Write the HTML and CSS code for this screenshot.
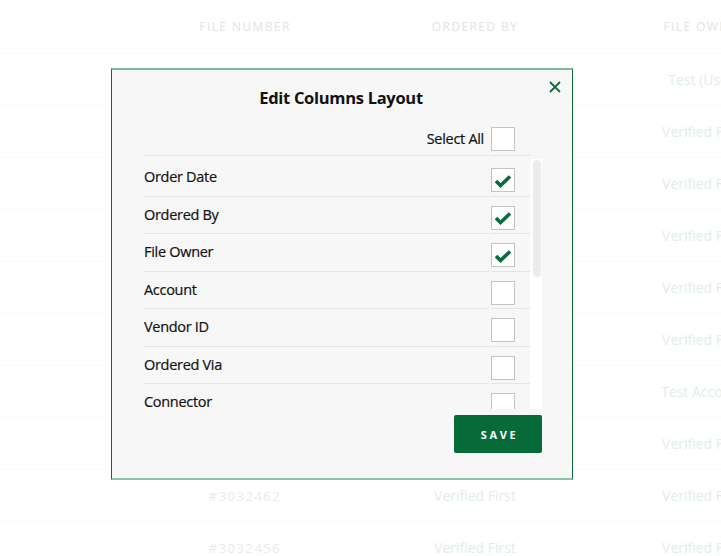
FILE: index.html
```html
<!DOCTYPE html>
<html lang="en">
<head>
<meta charset="utf-8">
<title>Edit Columns Layout</title>
<link rel="stylesheet" href="styles.css">
</head>
<body>
<div class="page">
  <div class="table">
    <div class="thead">
      <div class="cell head">File Number</div>
      <div class="cell head">Ordered By</div>
      <div class="cell head">File Owner</div>
    </div>
    <div class="trow"><div class="cell num">#3032498</div><div class="cell name">Verified First</div><div class="cell name">Test (User)</div></div>
    <div class="trow"><div class="cell num">#3032497</div><div class="cell name">Verified First</div><div class="cell name">Verified First</div></div>
    <div class="trow"><div class="cell num">#3032490</div><div class="cell name">Verified First</div><div class="cell name">Verified First</div></div>
    <div class="trow"><div class="cell num">#3032488</div><div class="cell name">Verified First</div><div class="cell name">Verified First</div></div>
    <div class="trow"><div class="cell num">#3032480</div><div class="cell name">Verified First</div><div class="cell name">Verified First</div></div>
    <div class="trow"><div class="cell num">#3032477</div><div class="cell name">Verified First</div><div class="cell name">Verified First</div></div>
    <div class="trow"><div class="cell num">#3032471</div><div class="cell name">Verified First</div><div class="cell name">Test Account</div></div>
    <div class="trow"><div class="cell num">#3032466</div><div class="cell name">Verified First</div><div class="cell name">Verified First</div></div>
    <div class="trow"><div class="cell num">#3032462</div><div class="cell name">Verified First</div><div class="cell name">Verified First</div></div>
    <div class="trow"><div class="cell num">#3032456</div><div class="cell name">Verified First</div><div class="cell name">Verified First</div></div>
  </div>

  <div class="modal">
    <button class="close" aria-label="Close">
      <svg width="12" height="12" viewBox="0 0 12 12"><path d="M1 1L11 11M11 1L1 11" stroke="#0b6b3c" stroke-width="1.8" fill="none"/></svg>
    </button>
    <h2 class="title">Edit Columns Layout</h2>
    <div class="list-head">
      <div class="label right">Select All</div>
      <div class="check-cell"><span class="box"></span></div>
    </div>
    <div class="scroller">
      <div class="list">
        <div class="row"><div class="label">Order Date</div><div class="check-cell"><span class="box checked"><svg width="18" height="14" viewBox="0 0 18 14"><path d="M2 7L6.5 11.5L16 2.5" stroke="#0b6b3c" stroke-width="3.6" fill="none"/></svg></span></div></div>
        <div class="row"><div class="label">Ordered By</div><div class="check-cell"><span class="box checked"><svg width="18" height="14" viewBox="0 0 18 14"><path d="M2 7L6.5 11.5L16 2.5" stroke="#0b6b3c" stroke-width="3.6" fill="none"/></svg></span></div></div>
        <div class="row"><div class="label">File Owner</div><div class="check-cell"><span class="box checked"><svg width="18" height="14" viewBox="0 0 18 14"><path d="M2 7L6.5 11.5L16 2.5" stroke="#0b6b3c" stroke-width="3.6" fill="none"/></svg></span></div></div>
        <div class="row"><div class="label">Account</div><div class="check-cell"><span class="box"></span></div></div>
        <div class="row"><div class="label">Vendor ID</div><div class="check-cell"><span class="box"></span></div></div>
        <div class="row"><div class="label">Ordered Via</div><div class="check-cell"><span class="box"></span></div></div>
        <div class="row"><div class="label">Connector</div><div class="check-cell"><span class="box"></span></div></div>
        <div class="row"><div class="label">Status</div><div class="check-cell"><span class="box"></span></div></div>
      </div>
      <div class="scrollbar"><div class="thumb"></div></div>
    </div>
    <div class="actions">
      <button class="save">SAVE</button>
    </div>
  </div>
</div>
</body>
</html>
```
FILE: styles.css
```css
* { box-sizing: border-box; }
html, body { margin: 0; padding: 0; background: #fff; }
body {
  font-family: "Open Sans", "Noto Sans", sans-serif;
  width: 721px;
  height: 556px;
  overflow: hidden;
}
.page { position: relative; width: 721px; height: 556px; overflow: hidden; }

/* faded table behind */
.table { width: 721px; overflow: hidden; }
.thead, .trow {
  display: grid;
  grid-template-columns: 230px 230px 230px;
  padding-left: 130px;
  width: 850px;
  border-bottom: 1px solid #fbfbfb;
}
.thead { height: 54px; }
.trow { height: 52px; }
.cell {
  display: flex;
  align-items: center;
  justify-content: center;
  white-space: nowrap;
}
.head {
  text-transform: uppercase;
  font-size: 12px;
  letter-spacing: 1.4px;
  color: #e3e3e3;
}
.num { font-size: 13px; letter-spacing: 1.5px; color: #ebebeb; }
.name { font-size: 14px; color: #e2ede8; }
.trow .cell:nth-child(3) { padding-right: 4px; }

/* modal */
.modal {
  position: absolute;
  left: 111px;
  top: 68px;
  width: 462px;
  height: 412px;
  background: #f7f7f7;
  border-left: 1px solid #0b6b3c;
  border-right: 1px solid #0b6b3c;
  border-top: 2px solid #7dbb9b;
  border-bottom: 2px solid #8cc4a6;
  padding: 17px 30px 0 32px;
  display: flex;
  flex-direction: column;
}
.close {
  position: absolute;
  right: 10px;
  top: 10px;
  width: 14px;
  height: 14px;
  padding: 1px;
  border: 0;
  background: none;
  display: flex;
  align-items: center;
  justify-content: center;
}
.title {
  margin: 0;
  padding-right: 4px;
  text-align: center;
  font-size: 16.5px;
  line-height: 22px;
  font-weight: 700;
  color: #111;
  letter-spacing: -0.3px;
}
.list-head, .row {
  display: grid;
  grid-template-columns: 345px 39px;
  column-gap: 2px;
  width: 386px;
}
.list-head { margin-top: 18px; }
.label {
  font-size: 14.5px;
  color: #111;
  border-bottom: 1px solid #e5e5e5;
  line-height: 36px;
  letter-spacing: -0.3px;
  -webkit-text-stroke: 0.2px #111;
}
.label.right {
  text-align: right;
  padding-right: 5px;
  line-height: 24px;
  padding-bottom: 4px;
}
.check-cell {
  border-bottom: 1px solid #e5e5e5;
  padding-top: 9px;
}
.list-head .check-cell { padding-top: 0; padding-bottom: 3px; }
.box {
  display: flex;
  align-items: center;
  justify-content: center;
  width: 24px;
  height: 24px;
  background: #fff;
  border: 1px solid #c3c3c3;
}
.box svg { margin-top: 1px; }
.row { height: 37.5px; flex-shrink: 0; }
.scroller {
  display: flex;
  margin-top: 3px;
  height: 250px;
  width: 398px;
}
.list {
  width: 386px;
  height: 250px;
  overflow: hidden;
  display: flex;
  flex-direction: column;
}
.scrollbar {
  width: 12px;
  height: 250px;
  background: #fff;
  padding: 1px 1px 0 3px;
}
.thumb {
  height: 117px;
  border-radius: 4px;
  background: #ececec;
}
.actions {
  display: flex;
  justify-content: flex-end;
  width: 398px;
  margin-top: 6px;
}
.save {
  width: 88px;
  height: 38px;
  border: 0;
  border-radius: 2px;
  background: #066b39;
  color: #fff;
  font-family: "Open Sans", "Noto Sans", sans-serif;
  font-weight: 700;
  font-size: 11px;
  letter-spacing: 2.6px;
  padding: 0 0 0 3px;
}
```
